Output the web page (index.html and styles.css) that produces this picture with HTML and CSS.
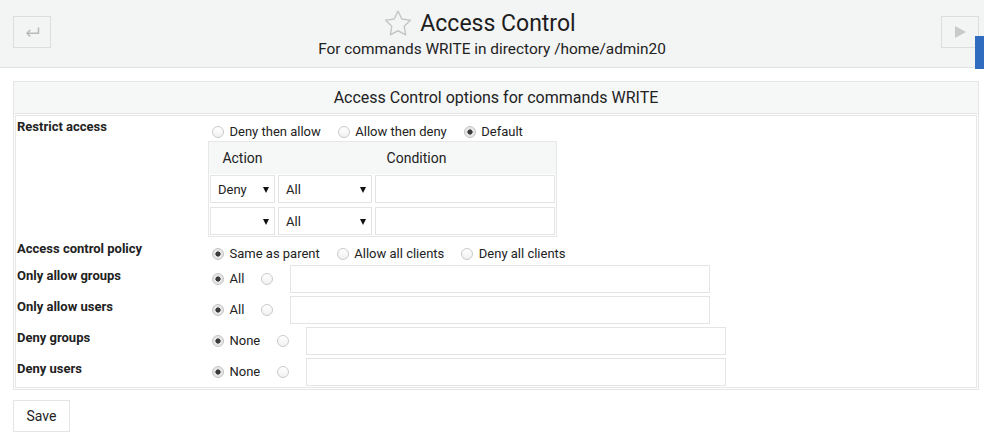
FILE: index.html
```html
<!DOCTYPE html>
<html lang="en">
<head>
<meta charset="utf-8">
<title>Access Control</title>
<link rel="stylesheet" href="styles.css">
</head>
<body>
<header class="top">
  <button class="nav-btn" type="button" aria-label="Back">
    <svg width="15" height="11" viewBox="0 0 15 11"><path d="M13.5 0.5v5.7H2" fill="none" stroke="#b9b9b9" stroke-width="1.5"/><path d="M5.2 2.9L2 6.2l3.2 3.3" fill="none" stroke="#b9b9b9" stroke-width="1.5"/></svg>
  </button>
  <div class="heading">
    <div class="title-row">
      <svg class="star" width="26" height="26" viewBox="2 1.5 20 20"><path d="M12 2.4l2.95 5.98 6.6.96-4.78 4.65 1.13 6.57L12 17.46l-5.9 3.1 1.13-6.57-4.78-4.65 6.6-.96z" fill="none" stroke="#c6c6c6" stroke-width="1.1" stroke-linejoin="round"/></svg>
      <h1 class="title">Access Control</h1>
    </div>
    <p class="subtitle">For commands WRITE in directory /home/admin20</p>
  </div>
  <button class="nav-btn" type="button" aria-label="Next">
    <svg width="11" height="12" viewBox="0 0 11 12"><polygon points="0,0 11,6 0,12" fill="#c9c9c9"/></svg>
  </button>
  <span class="side-tab"></span>
</header>

<main class="content">
  <section class="panel">
    <h2 class="panel-head">Access Control options for commands WRITE</h2>
    <div class="panel-body">
      <div class="form">
        <div class="label">Restrict access</div>
        <div class="value value-restrict">
          <div class="radios">
            <label class="opt"><input type="radio" name="order"><span>Deny then allow</span></label>
            <label class="opt"><input type="radio" name="order"><span>Allow then deny</span></label>
            <label class="opt"><input type="radio" name="order" checked><span>Default</span></label>
          </div>
          <div class="acl">
            <div class="acl-head"><span>Action</span><span>Condition</span></div>
            <div class="acl-body">
              <div class="acl-row">
                <span class="sel"><select><option>Deny</option></select></span>
                <span class="sel"><select><option>All</option></select></span>
                <input class="field" type="text">
              </div>
              <div class="acl-row">
                <span class="sel"><select><option></option></select></span>
                <span class="sel"><select><option>All</option></select></span>
                <input class="field" type="text">
              </div>
            </div>
          </div>
        </div>

        <div class="label">Access control policy</div>
        <div class="value value-policy">
          <div class="radios">
            <label class="opt"><input type="radio" name="policy" checked><span>Same as parent</span></label>
            <label class="opt"><input type="radio" name="policy"><span>Allow all clients</span></label>
            <label class="opt"><input type="radio" name="policy"><span>Deny all clients</span></label>
          </div>
        </div>

        <div class="label label-input">Only allow groups</div>
        <div class="value value-input">
          <label class="opt"><input type="radio" name="ag" checked><span>All</span></label>
          <label class="opt"><input type="radio" name="ag"></label>
          <input class="field wide" type="text">
        </div>

        <div class="label label-input">Only allow users</div>
        <div class="value value-input">
          <label class="opt"><input type="radio" name="au" checked><span>All</span></label>
          <label class="opt"><input type="radio" name="au"></label>
          <input class="field wide" type="text">
        </div>

        <div class="label label-input">Deny groups</div>
        <div class="value value-input">
          <label class="opt"><input type="radio" name="dg" checked><span>None</span></label>
          <label class="opt"><input type="radio" name="dg"></label>
          <input class="field wide" type="text">
        </div>

        <div class="label label-input">Deny users</div>
        <div class="value value-input">
          <label class="opt"><input type="radio" name="du" checked><span>None</span></label>
          <label class="opt"><input type="radio" name="du"></label>
          <input class="field wide" type="text">
        </div>
      </div>
    </div>
  </section>
  <button class="save" type="button">Save</button>
</main>
</body>
</html>
```

FILE: styles.css
```css
* { box-sizing: border-box; }

html, body {
  margin: 0;
  padding: 0;
  background: #fff;
}

body {
  font-family: Roboto, "Liberation Sans", sans-serif;
  font-size: 13px;
  color: #222;
  width: 984px;
  height: 436px;
  overflow: hidden;
}

/* ---------- header ---------- */
.top {
  position: relative;
  display: grid;
  grid-template-columns: 38px 1fr 38px;
  align-items: start;
  height: 68px;
  padding: 0 5px 0 13px;
  background: #f3f4f4;
  border-bottom: 1px solid #e2e3e3;
}

.nav-btn {
  margin: 16px 0 0;
  width: 38px;
  height: 32px;
  padding: 0;
  display: flex;
  align-items: center;
  justify-content: center;
  background: #f3f4f4;
  border: 1px solid #dcdddd;
  border-radius: 0;
}

.heading {
  padding-top: 10px;
  text-align: center;
}

.title-row {
  display: flex;
  justify-content: center;
  align-items: flex-start;
  gap: 9px;
  padding-right: 31px;
}

.star { display: block; }

.title {
  margin: 0;
  font-size: 23px;
  font-weight: 400;
  line-height: 27px;
  color: #1d1d1d;
}

.subtitle {
  margin: 3px 0 0;
  padding-right: 8px;
  font-size: 15.4px;
  line-height: 19px;
  color: #222;
}

.side-tab {
  position: absolute;
  top: 36px;
  right: 0;
  width: 9px;
  height: 33px;
  background: #2f6cc0;
}

/* ---------- content ---------- */
.content {
  padding: 13px 5px 0 13px;
}

.panel {
  border: 1px solid #e4e5e5;
}

.panel-head {
  margin: 0;
  height: 32px;
  padding-top: 6px;
  font-size: 16px;
  font-weight: 400;
  line-height: 19px;
  text-align: center;
  background: #f6f7f7;
  border-bottom: 1px solid #e4e5e5;
  color: #222;
}

.panel-body {
  padding: 1px;
}

.form {
  display: grid;
  grid-template-columns: 192px 1fr;
  border: 1px solid #e6e7e7;
}

.label {
  padding: 3px 0 0 1px;
  font-weight: 700;
  line-height: 15px;
  color: #222;
}

.label-input { padding-top: 4.5px; }

.value-restrict { padding: 8px 0 1px; }
.value-restrict .acl { margin-top: 1px; }
.value-policy { padding: 8px 0 1px; }

.value-input {
  display: flex;
  align-items: center;
  padding: 2px 0 1px 4px;
}

.radios {
  display: flex;
  align-items: center;
  height: 16px;
  padding-left: 4px;
}

.opt {
  display: inline-flex;
  align-items: center;
  gap: 5.5px;
  margin-right: 17px;
  line-height: 16px;
  white-space: nowrap;
}

.opt input[type="radio"] {
  appearance: none;
  -webkit-appearance: none;
  margin: 0;
  width: 12px;
  height: 12px;
  border: 1px solid #c9caca;
  border-radius: 50%;
  background: linear-gradient(#fff, #f1f1f1);
  flex: none;
}

.opt input[type="radio"]:checked {
  border-color: #c4c4c4;
  background: radial-gradient(circle, #3c3c3c 0 2.3px, #e6e6e6 2.9px);
}

/* ---------- acl table ---------- */
.acl {
  width: 349px;
  border: 1px solid #e6e7e7;
}

.acl-head {
  display: grid;
  grid-template-columns: 68px 1fr;
  height: 32px;
  align-items: center;
  padding: 0 1px;
  background: #f6f7f7;
  font-size: 14px;
  color: #222;
}

.acl-head span {
  text-align: center;
  line-height: 17px;
}

.acl-head span:first-child { padding-right: 3px; }

.acl-body {
  display: flex;
  flex-direction: column;
  gap: 4px;
  padding: 1px;
}

.acl-row {
  display: grid;
  grid-template-columns: 65px 94px 180px;
  gap: 3px;
}

.sel {
  position: relative;
  display: block;
  height: 28px;
}

.sel select {
  appearance: none;
  -webkit-appearance: none;
  width: 100%;
  height: 28px;
  margin: 0;
  padding: 0 0 0 7px;
  font-family: Roboto, "Liberation Sans", sans-serif;
  font-size: 13px;
  color: #222;
  background: #fff;
  border: 1px solid #e3e4e4;
  border-radius: 0;
}

.sel::after {
  content: "";
  position: absolute;
  right: 6px;
  top: 12px;
  width: 0;
  height: 0;
  border-left: 3.5px solid transparent;
  border-right: 3.5px solid transparent;
  border-top: 6px solid #111;
  pointer-events: none;
}

.field {
  display: block;
  height: 28px;
  margin: 0;
  padding: 0 6px;
  font-family: Roboto, "Liberation Sans", sans-serif;
  font-size: 13px;
  background: #fff;
  border: 1px solid #e3e4e4;
  border-radius: 0;
}

.field.wide {
  width: 420px;
}

/* ---------- save ---------- */
.save {
  margin-top: 10px;
  width: 57px;
  height: 32px;
  padding: 0;
  font-family: Roboto, "Liberation Sans", sans-serif;
  font-size: 14px;
  color: #222;
  background: #fff;
  border: 1px solid #e3e4e4;
  border-radius: 0;
}
```
